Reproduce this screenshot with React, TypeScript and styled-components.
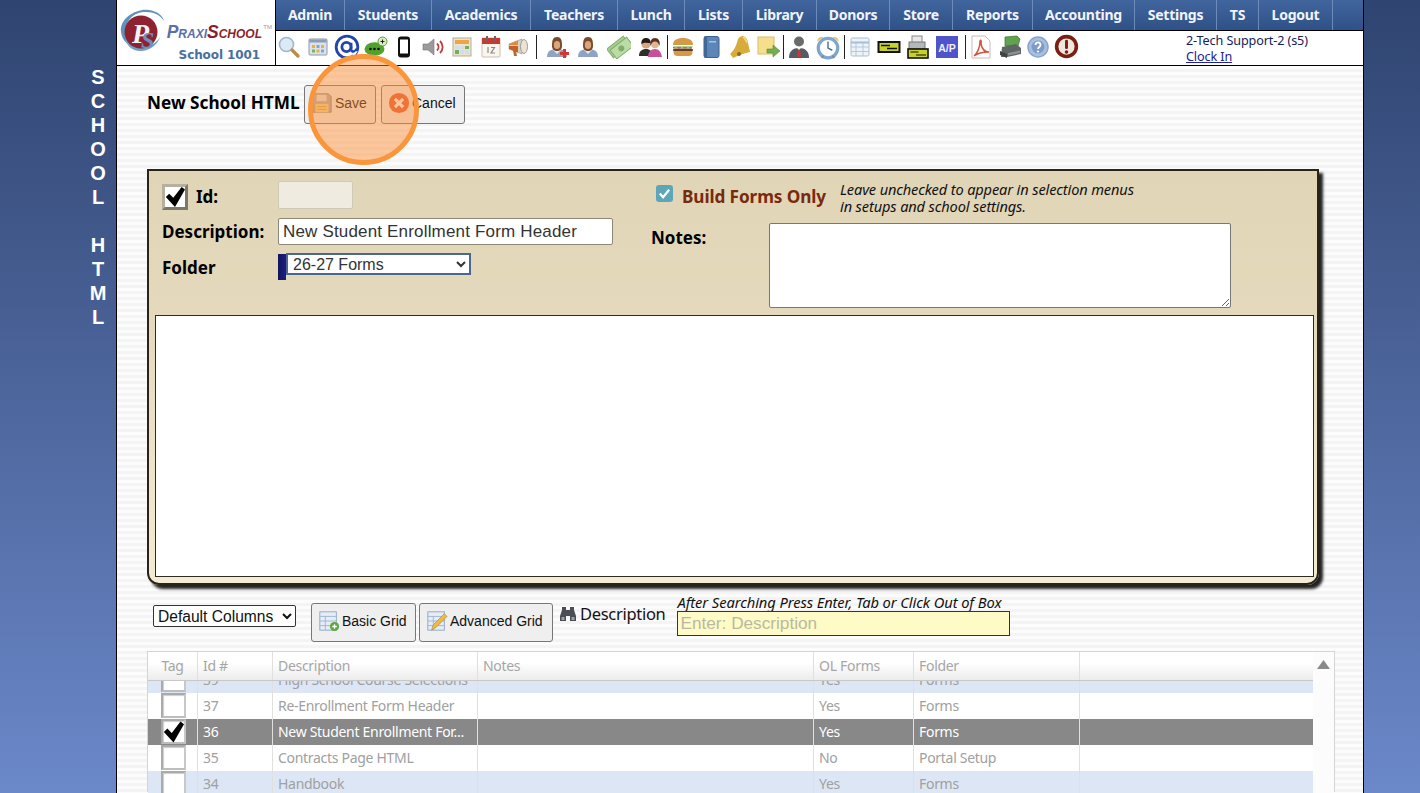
import React from "react";
import styled, { createGlobalStyle } from "styled-components";

const Global = createGlobalStyle`
  html, body { margin: 0; padding: 0; height: 793px; overflow: hidden; }
  body { background: linear-gradient(180deg, #2f4470 0%, #6b88c9 100%); font-family: "Liberation Sans", Arial, sans-serif; }
  #root { height: 793px; }
`;
const TAHOMA = `"Noto Sans", "DejaVu Sans", sans-serif`;

const Page = styled.div`display: flex; height: 793px; position: relative; overflow: hidden;`;
const Rail = styled.div`width: 116px; padding-top: 65px; box-sizing: border-box; display: flex; flex-direction: column; align-items: flex-end;`;
const RailLetter = styled.div`width: 36px; height: 24px; text-align: center; color: #fff; font: bold 20px/24px "Liberation Sans", Arial, sans-serif;`;
const Sheet = styled.div`width: 1248px; box-sizing: border-box; border-left: 1px solid #000; border-right: 1px solid #000; height: 793px; overflow: hidden;
  background: repeating-linear-gradient(180deg, #fcfcfc 0 3px, #f4f4f4 3px 6px);`;
const Header = styled.header`height: 66px; box-sizing: border-box; border-bottom: 1px solid #000; display: flex; background: #fff;`;
const LogoBox = styled.div`width: 144px; border-right: 1px solid #000; display: flex; flex-direction: column; align-items: flex-end; position: relative; padding: 0 14px 0 0;`;
const LogoText = styled.div`margin-top: 23px; margin-right: -1px; font: italic 900 17.5px/19px "Liberation Sans", Arial, sans-serif; font-variant: small-caps; color: #5a6fa6; white-space: nowrap;
  b { color: #8a1f2b; }`;
const Tm = styled.span`position: absolute; right: 3px; top: 24px; font: 6px "Liberation Sans", sans-serif; color: #99a;`;
const LogoSchool = styled.div`margin-top: 6px; font: bold 12px/15px "DejaVu Sans", sans-serif; color: #47709f; letter-spacing: -.1px; margin-right: 1px;`;
const LogoMark = styled.svg`position: absolute; left: 2px; top: 6px;`;
const HeadRight = styled.div`flex: 1; display: flex; flex-direction: column; min-width: 0;`;
const Nav = styled.nav`height: 31px; box-sizing: border-box; border-bottom: 1px solid #000; display: flex; background: linear-gradient(180deg, #41659d, #2f5188);`;
const NavItem = styled.a<{ $w: number }>`display: block; width: ${p => p.$w}px; box-sizing: border-box; height: 30px; border-right: 1px solid #6d8bb8; color: #f1f4fa; font: bold 14px/30px ${TAHOMA}; text-align: center; flex: none; letter-spacing: -.25px;`;
const Tools = styled.div`flex: 1; display: flex; align-items: center; margin-left: -1px; position: relative;`;
const Tool = styled.div<{ $w: number }>`width: ${p => p.$w}px; height: 28px; display: flex; align-items: center; justify-content: center; flex: none; margin-top: -3px;`;
const Sep = styled.div<{ $l: number; $r: number }>`width: 1px; height: 24px; background: #222; margin: -3px ${p => p.$r}px 0 ${p => p.$l}px; flex: none;`;
const Status = styled.div`position: absolute; left: 911px; top: 2px; font: 12.6px/16px ${TAHOMA}; color: #14205c; letter-spacing: -.1px; white-space: nowrap;
  a { color: #20209a; text-decoration: underline; display: block; }`;
const Content = styled.main`padding: 19px 0 0 30px;`;
const TitleRow = styled.div`display: flex; align-items: center; height: 39px; margin-bottom: 45px;`;
const Title = styled.h1`margin: -4px 5px 0 0; font: bold 17.2px/20px ${TAHOMA}; color: #000; width: 152px; white-space: nowrap;`;
const Btn = styled.button<{ $w: number }>`width: ${p => p.$w}px; height: 39px; box-sizing: border-box; padding: 0 0 4px 6px; display: flex; align-items: center; gap: 2px;
  background: #efefef; border: 1px solid #777; border-radius: 3px; font: 14px "Liberation Sans", Arial, sans-serif; color: #111; margin-right: 5px; white-space: nowrap;`;
const GridBtn = styled(Btn)`margin-right: 3px;`;
const Panel = styled.section`width: 1172px; height: 416px; box-sizing: border-box; border: 2px solid #2a2418; border-radius: 0 0 12px 12px;
  box-shadow: 4px 4px 3px #222; background: linear-gradient(180deg, #e1d5b7 0%, #e4d9bc 35%, #f4ebd4 100%); padding: 0 3px 0 6px; display: flex; flex-direction: column;`;
const Top = styled.div`height: 144px; display: flex;`;
const LeftFields = styled.div`width: 496px; padding: 9px 0 0 7px; box-sizing: border-box;`;
const FieldRow = styled.div<{ $h: number }>`display: flex; align-items: center; height: ${p => p.$h}px;`;
const Label = styled.label<{ $w: number; $mt?: number }>`width: ${p => p.$w}px; flex: none; margin-top: ${p => p.$mt ?? 0}px; font: bold 17px/20px ${TAHOMA}; color: #000; white-space: nowrap;`;
const IdInput = styled.div`width: 75px; height: 28px; box-sizing: border-box; background: #efebe0; border: 1px solid #cfc9b8; border-radius: 2px; margin-top: -2px;`;
const TextInput = styled.div`width: 335px; height: 27px; box-sizing: border-box; background: #fff; border: 1px solid #8c8777; border-radius: 2px; padding-left: 4px; font: 17px/25px "Liberation Sans", Arial, sans-serif; color: #333; letter-spacing: .17px; white-space: nowrap;`;
const FolderMark = styled.div`width: 8px; height: 26px; background: linear-gradient(90deg, #14145f, #1d1d80); flex: none;`;
const FolderSelect = styled.select`width: 185px; height: 22px; box-sizing: border-box; border: 2px solid #4c668e; background: #fff; font: 16px "Liberation Sans", Arial, sans-serif; color: #333; padding-left: 1px; margin-top: -5px; border-radius: 0;`;
const RightFields = styled.div`flex: 1; box-sizing: border-box;`;
const BuildRow = styled.div`display: flex; height: 52px; padding-left: 5px; align-items: flex-start;`;
const TealCheck = styled.div`width: 17px; height: 17px; margin-top: 14px; background: #5da5b8; border-radius: 3px; display: flex; align-items: center; justify-content: center; flex: none;`;
const BuildLabel = styled.div`margin: 16px 13px 0 9px; font: bold 17.2px/20px ${TAHOMA}; color: #7a2a0c; width: 145px; white-space: nowrap; letter-spacing: -.1px;`;
const Hint = styled.div`margin-top: 10px; font: italic 14.6px/17px ${TAHOMA}; color: #111; white-space: nowrap; letter-spacing: -.13px;`;
const NotesRow = styled.div`display: flex;`;
const NotesArea = styled.textarea`width: 462px; height: 85px; box-sizing: border-box; border: 1px solid #777; border-radius: 2px; background: #fff; margin: 0; display: block;`;
const NotesLabel = styled.label`width: 118px; font: bold 17px/20px ${TAHOMA}; margin-top: 5px; color: #000;`;
const Editor = styled.div`height: 262px; box-sizing: border-box; background: #fff; border: 1px solid #2f2a20; flex: none;`;
const Filters = styled.div`display: flex; align-items: flex-start; height: 55px; padding-top: 11px;`;
const ColSelect = styled.select`width: 143px; height: 22px; box-sizing: border-box; margin: 9px 15px 0 6px; border: 1px solid #333; background: #fff; font: 15.6px "Liberation Sans", Arial, sans-serif; color: #111; border-radius: 2px;`;
const GridBtnWrap = styled.div`margin-top: 7px; display: flex;`;
const DescLabel = styled.div`display: flex; align-items: center; gap: 3px; margin: 8px 11px 0 1px; font: 16.5px/20px ${TAHOMA}; color: #111; letter-spacing: -.3px; white-space: nowrap;`;
const SearchCol = styled.div`display: flex; flex-direction: column;`;
const SearchHint = styled.div`font: italic 14.7px/13px ${TAHOMA}; color: #111; white-space: nowrap; letter-spacing: -.08px; margin: 0 0 2px 1px;`;
const SearchBox = styled.div`width: 333px; height: 25px; box-sizing: border-box; border: 1px solid #333; background: #fffbc6; padding-left: 3px; font: 17.2px/23px "Liberation Sans", Arial, sans-serif; color: #b9b9a2;`;
const Grid = styled.div`width: 1188px; height: 141px; box-sizing: border-box; border: 1px solid #d4d4d4; border-bottom: 0; background: #fcfcfc; display: grid; grid-template-columns: 1fr 21px;`;
const GridMain = styled.div`min-width: 0;`;
const Cols = `50px 75px 205px 336px 100px 166px 1fr`;
const HeadRow = styled.div`display: grid; grid-template-columns: ${Cols}; height: 29px; border-bottom: 1px solid #c8c8c8; box-sizing: border-box; background: linear-gradient(180deg, #fff 0 38%, #ececec 100%);`;
const HeadCell = styled.div<{ $center?: boolean }>`border-right: 1px solid #e0e0e0; color: #a6a6a6; font: 14px/27px ${TAHOMA}; padding-left: ${p => p.$center ? 0 : 5}px; text-align: ${p => p.$center ? "center" : "left"}; letter-spacing: -.3px;
  &:last-child { border-right: 0; }`;
const Scroller = styled.div`height: 113px; overflow: hidden;`;
const Rows = styled.div`margin-top: -14px;`;
const Row = styled.div<{ $tone: "blue" | "white" | "sel" }>`display: grid; grid-template-columns: ${Cols}; height: 26px;
  background: ${p => p.$tone === "blue" ? "#dde6f5" : p.$tone === "sel" ? "#888888" : "#fff"};
  color: ${p => p.$tone === "sel" ? "#fff" : "#a0a0a0"};`;
const Cell = styled.div`border-right: 1px solid #e0e0e0; font: 14px/26px ${TAHOMA}; padding-left: 5px; overflow: hidden; white-space: nowrap; letter-spacing: -.3px;
  &:last-child { border-right: 0; }`;
const TagCell = styled.div`border-right: 1px solid #e0e0e0; display: flex; justify-content: center;`;
const TagBox = styled.div`width: 25px; height: 25px; box-sizing: border-box; margin-left: 1px; border: 2px solid #aaa; border-right-color: #c8c8c8; border-bottom-color: #bdbdbd; background: #fff; box-shadow: inset 1px 1px 1px #ccc; display: flex; align-items: center; justify-content: center;`;
const ScrollSide = styled.div`display: flex; justify-content: center; padding-top: 8px;`;
const Spot = styled.div`position: absolute; left: 308px; top: 54px; width: 111px; height: 111px; box-sizing: border-box; border-radius: 50%; border: 5px solid #f9963c; background: rgba(250, 140, 50, .48); pointer-events: none;`;
const FormCheck = styled.div`width: 26px; height: 26px; box-sizing: border-box; border: 3px solid #b5b0a2; border-right-color: #7c776a; border-bottom-color: #7c776a; background: #fff; margin: 2px 8px 0 0; display: flex; align-items: center; justify-content: center;`;

const Check = ({ s = 22 }: { s?: number }) => (
  <svg width={s} height={s} viewBox="0 0 24 24"><path d="M1 12l4-4 5 5L20 0l4 3-12 21z" fill="#000" /></svg>
);

const I = ({ children, s = 24 }: { children: React.ReactNode; s?: number }) => (
  <svg width={s} height={s} viewBox="0 0 24 24">{children}</svg>
);

const icons: React.ReactNode[] = [
  <I><circle cx="9.5" cy="9.5" r="7" fill="#dceaf8" stroke="#9fb6d0" strokeWidth="1.6" /><path d="M15 15l6 6" stroke="#b98e4c" strokeWidth="3.4" strokeLinecap="round" /></I>,
  <I><rect x="3" y="4" width="18" height="16" rx="1" fill="#dbe2ee" stroke="#8d99ad" /><rect x="3.5" y="4.5" width="17" height="3" fill="#8d9cb3" /><path d="M6 10h3v3H6z" fill="#e8b23c" /><path d="M10.5 10h3v3h-3z" fill="#7aa9d8" /><path d="M15 10h3v3h-3z" fill="#e8b23c" /><path d="M6 14.5h3v3H6z" fill="#79b35c" /><path d="M10.5 14.5h3v3h-3z" fill="#e8b23c" /><path d="M15 14.5h3v3h-3z" fill="#7aa9d8" /></I>,
  <I s={26}><circle cx="12" cy="12" r="10" fill="none" stroke="#2145a8" strokeWidth="2.6" /><circle cx="11.5" cy="12" r="4.2" fill="none" stroke="#2145a8" strokeWidth="2.6" /><path d="M15.8 8v6c0 3 4.4 3 5-.5" fill="none" stroke="#2145a8" strokeWidth="2.4" /><path d="M22 16l-3 4h-3l4-4z" fill="#fff" /></I>,
  <I><ellipse cx="10.5" cy="14" rx="10" ry="6.8" fill="#4fa32d" /><path d="M6 19l-2 4 6-3z" fill="#4fa32d" /><circle cx="6.5" cy="14" r="1.3" fill="#111" /><circle cx="10.5" cy="14" r="1.3" fill="#111" /><circle cx="14.5" cy="14" r="1.3" fill="#111" /><circle cx="18.5" cy="6.5" r="4.5" fill="#dcecc8" stroke="#4fa32d" /><path d="M16.5 6.5h4M18.5 4.5v4" stroke="#222" /></I>,
  <I><rect x="6" y="1.5" width="12" height="21" rx="3" fill="#111" /><rect x="8" y="4.5" width="8" height="14" fill="#fff" /></I>,
  <I><path d="M2 9h5l6-5v16l-6-5H2z" fill="#9b9b9b" stroke="#777" strokeWidth=".6" /><path d="M16 8.5c2 2 2 5 0 7M19 6c3.5 3.5 3.5 8.5 0 12" fill="none" stroke="#c33b3b" strokeWidth="1.8" /></I>,
  <I><rect x="3" y="3" width="18" height="18" fill="#e9e3d0" stroke="#b8ad8e" /><rect x="5" y="5" width="14" height="4" fill="#eea54a" /><path d="M5 11h4v3H5zM10 11h4v3h-4z" fill="#d2dde8" /><path d="M15 11h4v3h-4z" fill="#6fb05a" /><path d="M5 15h4v4H5z" fill="#6fb05a" /><path d="M10 15h4v4h-4zM15 15h4v4h-4z" fill="#d2dde8" /></I>,
  <I><rect x="3" y="3" width="18" height="19" rx="1" fill="#faf6ee" stroke="#c9bfb0" /><rect x="3" y="3" width="18" height="6" fill="#c8392f" /><rect x="7" y="1" width="2" height="5" fill="#666" /><rect x="15" y="1" width="2" height="5" fill="#666" /><path d="M9 12v6M12 12.5h3.5l-3.5 5.5h4" stroke="#8a8a8a" strokeWidth="1.2" fill="none" /></I>,
  <I><path d="M2 9l13-5v15L2 14z" fill="#d9d2c4" stroke="#a59d8e" strokeWidth=".7" /><path d="M2 9l9-3.4v4.4H2z" fill="#e08a3e" /><path d="M2 14l9 3.4V11H2z" fill="#c4622a" /><ellipse cx="17" cy="11.5" rx="3.5" ry="7" fill="#e9e4d7" stroke="#a59d8e" /><path d="M6 15l1 6h3l-1-5z" fill="#b66a2e" /></I>,
];
const personBody = (<><path d="M2 22c0-6 4-8 10-8s10 2 10 8z" fill="#8ea3c5" /><path d="M8 15l4 4 4-4z" fill="#e7e7ee" /><path d="M7 11C7 5 8 2 12 2s5 3 5 9c0 3-2 5-5 5s-5-2-5-5z" fill="#7a4a2a" /><ellipse cx="12" cy="10" rx="3.2" ry="4" fill="#d9a57c" /></>);
const icons2: React.ReactNode[] = [
  <I>{personBody}<path d="M15 17h3v-3h3v3h3v3h-3v3h-3v-3h-3z" fill="#d33a2c" /></I>,
  <I>{personBody}</I>,
  <I><g transform="rotate(-38 12 12)"><rect x="1" y="6" width="21" height="11" fill="#a8cf8e" stroke="#83ac6c" /><rect x="3" y="9" width="21" height="11" fill="#bcdca6" stroke="#83ac6c" /><circle cx="13" cy="14.5" r="3" fill="#83ac6c" /></g></I>,
  <I><path d="M1 21c0-5 3-7 7-7s6 2 7 7z" fill="#332c2c" /><circle cx="8" cy="9" r="4.6" fill="#d9a57c" /><path d="M3.4 9C3 4 6 3 8 3s5 1 4.6 5C10 8 6 7 3.4 9z" fill="#241c1c" /><path d="M10 22c0-5 3-8 7-8s6 3 7 8z" fill="#c8509a" /><circle cx="17" cy="9" r="4.2" fill="#e4b48e" /><path d="M12.5 11c-1-5 1-8 4.5-8s5.5 3 4.5 8c-1-3-2-4.5-4.5-4.5S13.5 8 12.5 11z" fill="#5b3320" /></I>,
];
const icons3: React.ReactNode[] = [
  <I><path d="M2 10C2 5 6 3 12 3s10 2 10 7z" fill="#d49a45" /><path d="M2 11.5h20l-2 2-3-1-3 1-3-1-3 1-3-1-3 1z" fill="#62a339" /><rect x="2" y="13.5" width="20" height="3" rx="1.5" fill="#6b3a1c" /><path d="M2.5 17h19c0 3-2 4-4 4h-11c-2 0-4-1-4-4z" fill="#d49a45" /></I>,
  <I><rect x="5" y="1.5" width="15" height="21" rx="2" fill="#5d86b8" stroke="#3c618f" /><rect x="5" y="1.5" width="3" height="21" fill="#3f6798" /><rect x="10" y="6" width="7" height="1.5" fill="#a9c2e0" /></I>,
  <I><path d="M15 1c3 1 5 4 5 7l2 9c-5 1-11 3-17 6-1-2-2-3-3-4 6-5 7-12 8-15 1-2 3-3 5-3z" fill="#d8ac3a" /><circle cx="11" cy="19" r="2" fill="#8a6a1c" /><path d="M15 2c2 1 3 3 4 6" stroke="#f3dc8d" strokeWidth="1.5" fill="none" /></I>,
  <I><rect x="2" y="2" width="16" height="17" fill="#f5df8c" stroke="#d9bd66" /><path d="M11 14h6v-4l7 6-7 6v-4h-6z" fill="#76ad4f" stroke="#568a34" strokeWidth=".6" /></I>,
];
const icons4: React.ReactNode[] = [
  <I><circle cx="12" cy="6.5" r="5" fill="#6a6a6a" /><path d="M2 23c0-7 4-10 10-10s10 3 10 10z" fill="#555b63" /><path d="M10 13l2 2 2-2z" fill="#eee" /><path d="M11 15h2l1 7h-4z" fill="#c63b33" /></I>,
  <I s={26}><circle cx="12" cy="13" r="9" fill="#fff" stroke="#7fa6cc" strokeWidth="3" /><path d="M12 7v6l4 2" stroke="#4f6f8c" strokeWidth="1.3" fill="none" /><path d="M2 7c0-3 3-5 6-4zM22 7c0-3-3-5-6-4z" fill="#e9c25b" /><path d="M6 22l2-2M18 22l-2-2" stroke="#8a8a8a" strokeWidth="1.5" /></I>,
];
const icons5: React.ReactNode[] = [
  <I><rect x="3" y="3" width="18" height="18" rx="1.5" fill="#eef3fa" stroke="#a8bcd6" /><path d="M3 7.5h18" stroke="#a8bcd6" strokeWidth="2" /><path d="M3 12h18M3 16.5h18M8 7.5v13.5M15 7.5v13.5" stroke="#b6c7de" /></I>,
  <I><rect x="1.5" y="7" width="21" height="10" fill="#c8d02a" stroke="#111" strokeWidth="2" /><path d="M4 10.5h9M10 13.5h10" stroke="#111" strokeWidth="1.3" /></I>,
  <I><rect x="6" y="1" width="10" height="8" fill="#e8e8e8" stroke="#888" /><rect x="3" y="7" width="16" height="7" fill="#b3b8bb" stroke="#777" /><rect x="2" y="14" width="20" height="9" fill="#c8d02a" stroke="#111" strokeWidth="1.6" /><path d="M4.5 17h8M10 20h10" stroke="#111" /></I>,
  <I><rect x="1" y="1" width="22" height="22" fill="#4f55c8" /><text x="12" y="16.5" textAnchor="middle" fill="#eef" fontFamily="Liberation Sans, Arial, sans-serif" fontWeight="700" fontSize="10.5">A/P</text></I>,
];
const icons6: React.ReactNode[] = [
  <I><path d="M3 1h13l5 5v17H3z" fill="#fff" stroke="#c7bcbc" /><path d="M5 21c3-2 6-9 6-14 0-3 2-2 1 2 1 5 4 8 8 8-3 0-10 0-15 4z" fill="none" stroke="#d4553f" strokeWidth="1.5" /></I>,
  <I><path d="M7 2l12-1 3 3-2 7H7z" fill="#5fa34c" stroke="#3d7030" strokeWidth=".7" /><path d="M4 12l14-3 5 4v6l-14 3H3z" fill="#5f6464" /><path d="M2 16l7 3v4l-7-3z" fill="#3e4242" /><path d="M10 18l12-2.5v2.5l-12 2.5z" fill="#8c9090" /></I>,
  <I><circle cx="12" cy="12" r="10" fill="#a7bfe0" stroke="#8aa5cb" strokeWidth="1.5" /><circle cx="12" cy="12" r="6.5" fill="#7e9cc9" /><path d="M9.5 10c0-3.5 5-3.5 5 0 0 2-2.5 2-2.5 4" fill="none" stroke="#fff" strokeWidth="1.8" /><circle cx="12" cy="16.5" r="1.1" fill="#fff" /></I>,
  <I s={25}><circle cx="12" cy="12" r="9.5" fill="#f1e7df" stroke="#7a1f13" strokeWidth="3.4" /><rect x="10.6" y="5.5" width="2.8" height="9" rx="1.2" fill="#7a1f13" /><circle cx="12" cy="17.3" r="1.7" fill="#7a1f13" /></I>,
];

const navItems: [string, number][] = [["Admin", 69], ["Students", 87], ["Academics", 99], ["Teachers", 87], ["Lunch", 67], ["Lists", 58], ["Library", 74], ["Donors", 73], ["Store", 63], ["Reports", 80], ["Accounting", 102], ["Settings", 82], ["TS", 42], ["Logout", 74]];

const ToolGroup = ({ list, w }: { list: React.ReactNode[]; w: number }) => <>{list.map((n, i) => <Tool key={i} $w={w}>{n}</Tool>)}</>;

const rows = [
  { id: "39", d: "High School Course Selections", ol: "Yes", f: "Forms", tone: "blue" as const },
  { id: "37", d: "Re-Enrollment Form Header", ol: "Yes", f: "Forms", tone: "white" as const },
  { id: "36", d: "New Student Enrollment For...", ol: "Yes", f: "Forms", tone: "sel" as const },
  { id: "35", d: "Contracts Page HTML", ol: "No", f: "Portal Setup", tone: "white" as const },
  { id: "34", d: "Handbook", ol: "Yes", f: "Forms", tone: "blue" as const },
];

export default function App() {
  return (
    <Page>
      <Global />
      <Rail>
        {"SCHOOL HTML".split("").map((c, i) => <RailLetter key={i}>{c === " " ? "\u00a0" : c}</RailLetter>)}
      </Rail>
      <Sheet>
        <Header>
          <LogoBox>
            <LogoMark width="50" height="50" viewBox="0 0 50 50">
              <path d="M2 26C0 12 18 2 30 4c8 1 14 6 15 11-4-6-10-9-18-9C15 6 5 14 7 29c1 6 6 11 12 12C10 41 3 35 2 26z" fill="#5f93bd" />
              <path d="M6 31c3 9 14 13 24 9 5-2 9-5 11-9-2 7-9 13-18 14C14 46 7 40 6 31z" fill="#6fa2c7" />
              <circle cx="22" cy="26" r="16.5" fill="#8e2230" />
              <text x="13" y="37" fill="#f3f3f7" fontFamily="Liberation Serif, serif" fontStyle="italic" fontWeight="700" fontSize="28">P</text>
              <text x="22" y="42" fill="#6f8fc0" fontFamily="Liberation Serif, serif" fontStyle="italic" fontWeight="700" fontSize="24">S</text>
            </LogoMark>
            <LogoText>Praxi<b>School</b></LogoText>
            <Tm>TM</Tm>
            <LogoSchool>School 1001</LogoSchool>
          </LogoBox>
          <HeadRight>
            <Nav>
              {navItems.map(([t, w]) => <NavItem key={t} $w={w}>{t}</NavItem>)}
            </Nav>
            <Tools>
              <ToolGroup list={icons} w={28.75} />
              <Sep $l={2.6} $r={4.5} />
              <ToolGroup list={icons2} w={31} />
              <Sep $l={1.5} $r={0} />
              <ToolGroup list={icons3} w={28.5} />
              <Sep $l={1} $r={0} />
              <ToolGroup list={icons4} w={29} />
              <Sep $l={2} $r={0.5} />
              <ToolGroup list={icons5} w={29} />
              <Sep $l={3.5} $r={0.5} />
              <ToolGroup list={icons6} w={28.5} />
              <Status>2-Tech Support-2 (s5)<a>Clock In</a></Status>
            </Tools>
          </HeadRight>
        </Header>
        <Content>
          <TitleRow>
            <Title>New School HTML</Title>
            <Btn $w={72}>
              <svg width="22" height="24" viewBox="0 0 24 24"><path d="M2 2h17l3 3v17H2z" fill="#b3b1ad" stroke="#8a8884" /><rect x="6" y="3" width="11" height="7" fill="#e4e4e4" /><rect x="5" y="13" width="14" height="9" fill="#f1d98c" /><path d="M7 16h10M7 19h10" stroke="#c6a94e" /></svg>
              Save
            </Btn>
            <Btn $w={84}>
              <svg width="22" height="22" viewBox="0 0 24 24"><circle cx="12" cy="12" r="11" fill="#e85a3a" /><path d="M7.5 7.5l9 9M16.5 7.5l-9 9" stroke="#fff" strokeWidth="3.4" /></svg>
              Cancel
            </Btn>
          </TitleRow>
          <Panel>
            <Top>
              <LeftFields>
                <FieldRow $h={31}>
                  <FormCheck><Check /></FormCheck>
                  <Label $w={82} $mt={2}>Id:</Label>
                  <IdInput />
                </FieldRow>
                <FieldRow $h={41}>
                  <Label $w={116}>Description:</Label>
                  <TextInput>New Student Enrollment Form Header</TextInput>
                </FieldRow>
                <FieldRow $h={29}>
                  <Label $w={116} $mt={3}>Folder</Label>
                  <FolderMark />
                  <FolderSelect defaultValue="26-27 Forms"><option>26-27 Forms</option></FolderSelect>
                </FieldRow>
              </LeftFields>
              <RightFields>
                <BuildRow>
                  <TealCheck><svg width="13" height="13" viewBox="0 0 14 14"><path d="M2 7l3.5 4L12 3" fill="none" stroke="#fff" strokeWidth="2.4" /></svg></TealCheck>
                  <BuildLabel>Build Forms Only</BuildLabel>
                  <Hint>Leave unchecked to appear in selection menus<br />in setups and school settings.</Hint>
                </BuildRow>
                <NotesRow>
                  <NotesLabel>Notes:</NotesLabel>
                  <NotesArea />
                </NotesRow>
              </RightFields>
            </Top>
            <Editor />
          </Panel>
          <Filters>
            <ColSelect defaultValue="Default Columns"><option>Default Columns</option></ColSelect>
            <GridBtnWrap>
              <GridBtn $w={105}>
                <svg width="22" height="22" viewBox="0 0 24 24"><rect x="2" y="2" width="18" height="20" fill="#e6edf6" stroke="#8fa6c4" /><path d="M2 7h18M2 12h18M2 17h18M8 7v15" stroke="#9fb4cf" /><circle cx="18" cy="18" r="5" fill="#5ea93f" /><path d="M15.5 18h5M18 15.5v5" stroke="#fff" strokeWidth="1.4" /></svg>
                Basic Grid
              </GridBtn>
              <Btn $w={134}>
                <svg width="22" height="22" viewBox="0 0 24 24"><rect x="2" y="2" width="18" height="20" fill="#e6edf6" stroke="#8fa6c4" /><path d="M2 7h18M2 12h18M2 17h18M8 7v15" stroke="#9fb4cf" /><path d="M6 22l2-6L20 4l3 3L11 19z" fill="#ecb94c" stroke="#b98a2c" strokeWidth=".7" /></svg>
                Advanced Grid
              </Btn>
            </GridBtnWrap>
            <DescLabel>
              <svg width="18" height="16" viewBox="0 0 18 16"><path d="M3 1h4v3h4V1h4v3l2 6v5h-6v-5H7v5H1v-5l2-6z" fill="#4b4f55" /><path d="M2.5 11h3v3h-3zM12.5 11h3v3h-3z" fill="#9aa0a8" /></svg>
              Description
            </DescLabel>
            <SearchCol>
              <SearchHint>After Searching Press Enter, Tab or Click Out of Box</SearchHint>
              <SearchBox>Enter: Description</SearchBox>
            </SearchCol>
          </Filters>
          <Grid>
            <GridMain>
              <HeadRow>
                <HeadCell $center>Tag</HeadCell>
                <HeadCell>Id #</HeadCell>
                <HeadCell>Description</HeadCell>
                <HeadCell>Notes</HeadCell>
                <HeadCell>OL Forms</HeadCell>
                <HeadCell>Folder</HeadCell>
                <HeadCell />
              </HeadRow>
              <Scroller>
                <Rows>
                  {rows.map(r => (
                    <Row key={r.id} $tone={r.tone}>
                      <TagCell><TagBox>{r.tone === "sel" && <Check s={24} />}</TagBox></TagCell>
                      <Cell>{r.id}</Cell>
                      <Cell>{r.d}</Cell>
                      <Cell />
                      <Cell>{r.ol}</Cell>
                      <Cell>{r.f}</Cell>
                      <Cell />
                    </Row>
                  ))}
                </Rows>
              </Scroller>
            </GridMain>
            <ScrollSide>
              <svg width="13" height="9" viewBox="0 0 13 9"><path d="M6.5 0L13 9H0z" fill="#8a8a8a" /></svg>
            </ScrollSide>
          </Grid>
        </Content>
      </Sheet>
      <Spot />
    </Page>
  );
}
